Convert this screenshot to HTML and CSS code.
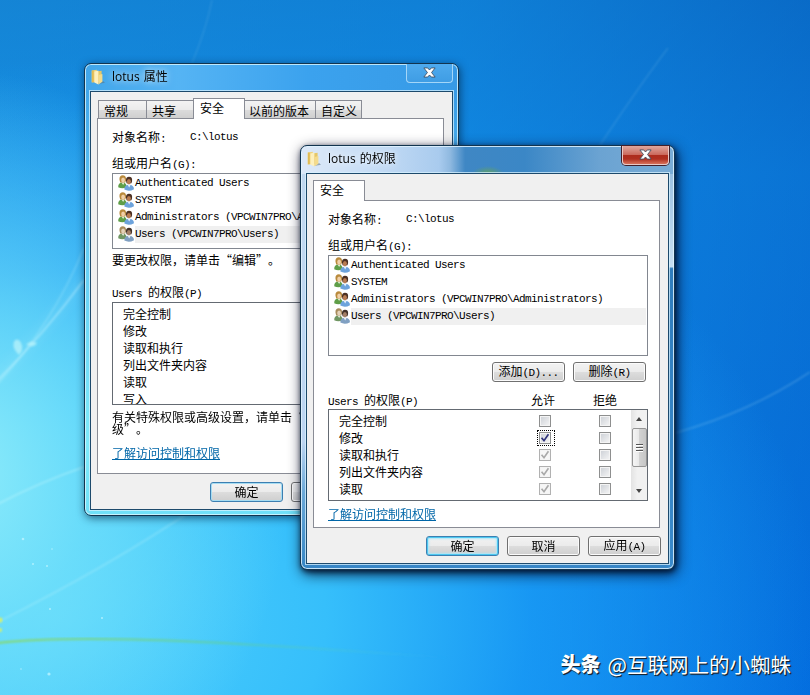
FILE: index.html
```
<!DOCTYPE html>
<html lang="zh-CN">
<head>
<meta charset="UTF-8" />
<title>lotus 的权限</title>
<link rel="stylesheet" href="styles.css">
</head>
<body>
<!-- обои рабочего стола -->
<svg class="wallpaper" viewBox="0 0 810 695" width="810" height="695" aria-hidden="true">
  <defs>
    <filter id="soft"><feGaussianBlur stdDeviation="0.8" /></filter>
    <filter id="haze" x="-50%" y="-50%" width="200%" height="200%"><feGaussianBlur stdDeviation="6" /></filter>
    <linearGradient id="stem"><stop offset="0" stop-color="#8fd84a" /><stop offset="0.5" stop-color="#5fd0a0" /><stop offset="1" stop-color="#40c0f0" stop-opacity="0" /></linearGradient>
  </defs>
  <g fill="none" stroke="#d8fbff" filter="url(#soft)">
    <path d="M-4 382 Q44 334 84 280" stroke-width="1.8" opacity="0.42" />
    <path d="M-4 386 Q54 322 84 248" stroke-width="1.2" opacity="0.28" />
    <path d="M-4 505 Q40 482 84 467" stroke-width="1.8" opacity="0.36" />
    <path d="M-4 623 Q110 566 200 505" stroke-width="1.8" opacity="0.24" />
    <path d="M192 63 Q206 30 212 0" stroke-width="1.5" opacity="0.1" />
    <path d="M600 145 Q640 85 668 48" stroke-width="1.5" opacity="0.12" />
    <path d="M675 433 Q750 412 810 372" stroke-width="1.6" opacity="0.18" />
    <path d="M-4 380 Q44 330 84 280" stroke-width="9" opacity="0.1" filter="url(#haze)" />
  </g>
  <path d="M-2 643 Q50 637 150 640 T450 658" fill="none" stroke="url(#stem)" stroke-width="1.8" opacity="0.8" filter="url(#soft)" />
  <g fill="#b9f3fa" opacity="0.75" filter="url(#soft)">
    <path d="M19 355 Q10 346 15 340 Q20 338 22 346 Q23 351 19 355z" />
    <path d="M26 345 Q31 339 37 343 Q35 348 26 345z" />
  </g>
  <g fill="#c8f7ff" opacity="0.7">
    <circle cx="23" cy="539" r="1.3" /><circle cx="33" cy="564" r="1" /><circle cx="47" cy="566" r="1" />
    <circle cx="50" cy="609" r="1" /><circle cx="102" cy="618" r="1.1" /><circle cx="49" cy="674" r="1.6" />
    <circle cx="52" cy="549" r="0.8" /><circle cx="21" cy="669" r="0.8" />
  </g>
  <g fill="#d4f06a" filter="url(#soft)"><circle cx="0" cy="620" r="2.5" /><circle cx="0" cy="630" r="2" /></g>
</svg>

<!-- общие значки -->
<svg class="sprite" aria-hidden="true">
  <symbol id="folder" viewBox="0 0 16 16">
    <path d="M8 15 L15 13.8 L13 12z" fill="#5c7280" opacity="0.55" />
    <path d="M6.4 2.4 L11.6 1.8 V12.6 L6.4 14z" fill="#e6c766" />
    <path d="M1.6 1.4 L6.8 0.8 V13 L1.6 13.4z" fill="#f0d27a" />
    <path d="M2.2 1.6 L3.6 1.5 V13.2 L2.2 13.2z" fill="#dcb64c" />
    <path d="M4.4 2.6 L8.4 1.4 V15.4 L4.4 13.4z" fill="#fdf0bd" />
    <path d="M8.4 6 L12.4 5 V12.8 L8.4 15.4z" fill="#f4db8c" />
  </symbol>
  <symbol id="users" viewBox="0 0 16 16">
    <path d="M0.2 12.2 Q0 7.6 4.6 7.4 Q8.6 7.5 8.8 12 Q4.5 14.4 0.2 12.2z" fill="#5f9e48" />
    <path d="M3.3 7.2 L5.2 10 L6.6 7.2z" fill="#e4efd8" />
    <path d="M1.5 4.8 Q1 0.4 5 0.3 Q8.7 0.6 7.9 5.4 L7.2 7.4 H2.2z" fill="#b98a3c" />
    <ellipse cx="5.1" cy="5" rx="1.9" ry="2.5" fill="#f0cfa8" />
    <path d="M6.4 14.6 Q6 10 11 9.7 Q15.8 9.9 16 14.2 Q11 17 6.4 14.6z" fill="#6da3dc" />
    <path d="M9.4 9.6 L11.2 12.6 L12.8 9.6z" fill="#eaf2fb" />
    <path d="M8 5.4 Q7.8 1.8 11 1.7 Q14.6 1.8 14.1 6 L13.4 8.2 H8.6z" fill="#4b3023" />
    <ellipse cx="10.9" cy="6.6" rx="2" ry="2.7" fill="#b97c52" />
  </symbol>
  <symbol id="close" viewBox="0 0 12 10">
    <path d="M0.8 0.8 H4.3 L6 2.7 L7.7 0.8 H11.2 L7.9 5 L11.2 9.2 H7.7 L6 7.3 L4.3 9.2 H0.8 L4.1 5z" fill="#fff" stroke="#3d4c60" stroke-width="0.8" />
  </symbol>
  <symbol id="check" viewBox="0 0 9 9">
    <path d="M1.4 4.2 L3.6 6.9 L7.6 1.2" fill="none" stroke="currentColor" stroke-width="1.5" />
  </symbol>
</svg>

<!-- окно свойств -->
<div class="window properties">
  <div class="titlebar">
    <svg class="folder"><use href="#folder" /></svg>
    <span class="caption">lotus 属性</span>
    <span class="close"><svg><use href="#close" /></svg></span>
  </div>
  <div class="content">
    <div class="tabs">
      <div class="tab general">常规</div>
      <div class="tab share">共享</div>
      <div class="tab active">安全</div>
      <div class="tab versions">以前的版本</div>
      <div class="tab custom">自定义</div>
    </div>
    <div class="page">
      <div class="object"><span>对象名称<i>:</i></span><i>C:\lotus</i></div>
      <div class="label">组或用户名<i>(G):</i></div>
      <div class="users">
        <div class="user"><svg><use href="#users" /></svg><i>Authenticated Users</i></div>
        <div class="user"><svg><use href="#users" /></svg><i>SYSTEM</i></div>
        <div class="user"><svg><use href="#users" /></svg><i>Administrators (VPCWIN7PRO\Administrators)</i></div>
        <div class="user selected"><svg><use href="#users" /></svg><i>Users (VPCWIN7PRO\Users)</i></div>
      </div>
      <div class="hint">要更改权限，请单击<b class="quote open">“</b>编辑<b class="quote">”</b>。</div>
      <div class="perm-head"><span><i>Users </i>的权限<i>(P)</i></span></div>
      <div class="perms">
        <div class="rows">
          <div class="row">完全控制</div>
          <div class="row">修改</div>
          <div class="row">读取和执行</div>
          <div class="row">列出文件夹内容</div>
          <div class="row">读取</div>
          <div class="row">写入</div>
        </div>
      </div>
      <div class="advanced">有关特殊权限或高级设置，请单击<b class="quote open">“</b><br>级<b class="quote">”</b>。</div>
      <a class="link">了解访问控制和权限</a>
    </div>
    <div class="actions">
      <button class="btn default">确定</button>
      <button class="btn">取消</button>
      <button class="btn">应用<i>(A)</i></button>
    </div>
  </div>
</div>

<!-- окно разрешений -->
<div class="window permissions">
  <div class="titlebar">
    <svg class="folder"><use href="#folder" /></svg>
    <span class="caption">lotus 的权限</span>
    <span class="close"><svg><use href="#close" /></svg></span>
  </div>
  <div class="content">
    <div class="tabs">
      <div class="tab active">安全</div>
    </div>
    <div class="page">
      <div class="object"><span>对象名称<i>:</i></span><i>C:\lotus</i></div>
      <div class="label">组或用户名<i>(G):</i></div>
      <div class="users">
        <div class="user"><svg><use href="#users" /></svg><i>Authenticated Users</i></div>
        <div class="user"><svg><use href="#users" /></svg><i>SYSTEM</i></div>
        <div class="user"><svg><use href="#users" /></svg><i>Administrators (VPCWIN7PRO\Administrators)</i></div>
        <div class="user selected"><svg><use href="#users" /></svg><i>Users (VPCWIN7PRO\Users)</i></div>
      </div>
      <div class="edit">
        <button class="btn">添加<i>(D)...</i></button>
        <button class="btn">删除<i>(R)</i></button>
      </div>
      <div class="perm-head"><span><i>Users </i>的权限<i>(P)</i></span><span>允许</span><span>拒绝</span></div>
      <div class="perms">
        <div class="rows">
          <div class="row"><span>完全控制</span><span class="box"></span><span class="box"></span></div>
          <div class="row"><span>修改</span><span class="box checked focus"><svg><use href="#check" /></svg></span><span class="box"></span></div>
          <div class="row"><span>读取和执行</span><span class="box disabled"><svg><use href="#check" /></svg></span><span class="box"></span></div>
          <div class="row"><span>列出文件夹内容</span><span class="box disabled"><svg><use href="#check" /></svg></span><span class="box"></span></div>
          <div class="row"><span>读取</span><span class="box disabled"><svg><use href="#check" /></svg></span><span class="box"></span></div>
        </div>
        <div class="scrollbar">
          <span class="arrow up"></span>
          <span class="thumb"></span>
          <span class="arrow down"></span>
        </div>
      </div>
      <a class="link">了解访问控制和权限</a>
    </div>
    <div class="actions">
      <button class="btn default hot">确定</button>
      <button class="btn">取消</button>
      <button class="btn">应用<i>(A)</i></button>
    </div>
  </div>
</div>

<div class="watermark"><strong>头条</strong><span>@互联网上的小蜘蛛</span></div>
</body>
</html>
```
FILE: styles.css
```
/* Рабочий стол */
html, body {
  margin: 0; padding: 0;
  width: 810px;
  height: 695px;
  overflow: hidden;
}
body {
  position: relative;
  font-family: 'Noto Sans CJK SC', sans-serif;
  font-size: 12px;
  color: #000;
  background:
    radial-gradient(ellipse 330px 400px at -40px 470px, rgba(150,240,250,0.9) 0%, rgba(120,228,250,0.7) 40%, rgba(90,215,250,0) 100%),
    radial-gradient(ellipse 760px 560px at 60px 620px, #50d0fc 0%, #36bffb 35%, rgba(28,160,248,0.75) 62%, rgba(10,130,240,0) 100%),
    linear-gradient(100deg, rgba(30,150,225,0.5) 0%, rgba(20,140,228,0.5) 50%, rgba(0,70,180,0.35) 100%),
    linear-gradient(180deg, #0b73c9 0%, #0d84e0 25%, #0a80e6 60%, #0583f6 100%);
}
i {
  font-family: 'Liberation Mono', monospace;
  font-style: normal;
  font-size: 11px;
  letter-spacing: -0.6px;
  white-space: pre;
}
.wallpaper {
  position: absolute;
  left: 0; top: 0;
}
.sprite {
  position: absolute;
  width: 0;
  height: 0;
}

/* Окна */
.window {
  position: absolute;
  width: 375px;
  box-sizing: border-box;
  padding: 0 5px 5px;
  border: 1px solid #12344f;
  border-radius: 7px;
  display: flex;
  flex-direction: column;
}
.properties {
  left: 84px;
  top: 63px;
  height: 453px;
  background: linear-gradient(180deg, rgba(80,180,245,0) 0, rgba(80,180,245,0) 28px, rgba(120,225,250,0.6) 160px, #7eeafa 380px, #70e0f8 100%), linear-gradient(90deg, #41a6ea 0%, #55b4f4 25%, #3ba2ee 60%, #379ae6 100%);
  box-shadow: inset 0 0 0 1px rgba(220,248,255,0.8), 1px 2px 8px rgba(0,30,60,0.65);
}
.permissions {
  left: 300px;
  top: 145px;
  height: 425px;
  background:
    radial-gradient(ellipse 16px 8px at 187px 28px, rgba(110,170,70,0.8), rgba(110,170,70,0)) top / 100% 28px no-repeat,
    linear-gradient(90deg, #dde9f8 0%, #c5dcf5 20%, #a9cbee 37%, #8fb9e0 40%, #3f87c4 44%, #3b87c6 60%, #6ba3d2 80%, #79acd6 100%) top / 100% 28px no-repeat,
    linear-gradient(180deg, #8fb8dc 0%, #c6dff2 28.5%, #2f7dbd 29%, #3a8acb 100%) right / 7px 100% no-repeat,
    linear-gradient(180deg, #c2d9f0 0%, #bcd5f2 70%, #6aa8d8 82%, #3585c4 100%) left / 7px 100% no-repeat,
    #3886c6;
  box-shadow: inset 0 0 0 1px rgba(225,243,255,0.85), 1px 2px 5px rgba(0,15,40,0.75), 2px 4px 14px rgba(0,10,35,0.85);
}
.titlebar {
  height: 27px;
  flex: none;
  display: flex;
  align-items: flex-start;
}
.folder {
  width: 16px;
  height: 16px;
  margin: 5px 0 0;
}
.caption {
  flex: 1;
  margin: 4px 0 0 6px;
  line-height: 18px;
  font-family: 'Open Sans', 'Noto Sans CJK SC', sans-serif;
  word-spacing: 1px;
  text-shadow: 0 0 6px rgba(255,255,255,0.7), 0 0 9px rgba(255,255,255,0.5);
}
.close {
  width: 47px;
  height: 19px;
  box-sizing: border-box;
  border: 1px solid #a4d6f8;
  border-top: 0;
  border-radius: 0 0 4px 4px;
  display: flex;
  justify-content: center;
  align-items: center;
  background: linear-gradient(#4eaaee, #3f9de4);
}
.close svg {
  width: 13px;
  height: 11px;
  margin-bottom: 2px;
}
.permissions .close {
  border-color: #e9c9c6;
  background: linear-gradient(#e0a79d 0%, #cb6a5d 48%, #ad2c1d 50%, #b03020 72%, #d6705a 100%);
  box-shadow: 0 0 0 1px #43202a;
}
.content {
  flex: 1;
  box-sizing: border-box;
  padding: 6px 8px 0 6px;
  border: 1px solid #1d4a6c;
  outline: 1px solid rgba(215,242,255,0.75);
  background: #f0f0f0;
}

/* Вкладки */
.tabs {
  display: flex;
  align-items: flex-end;
  height: 20px;
}
.tab {
  box-sizing: border-box;
  height: 18px;
  line-height: 19px;
  border: 1px solid #898c95;
  border-bottom: 0;
  border-left-width: 0;
  background: linear-gradient(#f3f3f3 0%, #ebebeb 50%, #dcdcdc 50%, #cfcfcf 100%);
}
.tab.active {
  position: relative;
  width: 52px;
  height: 21px;
  margin-bottom: -1px;
  padding-left: 6px;
  line-height: 18px;
  background: #fff;
  border-left-width: 1px;
}
.tab.general { width: 49px; margin-left: 1px; padding-left: 5px; border-left-width: 1px; }
.tab.share { width: 46px; padding-left: 5px; border-right: 0; }
.tab.versions { width: 71px; padding-left: 4px; }
.tab.custom { width: 46px; padding-left: 5px; }
.page {
  box-sizing: border-box;
  width: 347px;
  border: 1px solid #898c95;
  padding: 8px 0 0 14px;
  background: #fff;
}
.properties .page { height: 356px; }
.permissions .page { height: 328px; }

/* Содержимое вкладки */
.object {
  display: flex;
  height: 20px;
  line-height: 20px;
}
.object span { width: 78px; }
.label {
  height: 19px;
  margin-top: 7px;
  line-height: 18px;
}
.users {
  box-sizing: border-box;
  width: 320px;
  height: 101px;
  padding: 1px 1px 0 5px;
  border: 1px solid #828790;
}
.properties .users { height: 76px; }
.user {
  display: flex;
  height: 17px;
  line-height: 17px;
}
.user svg {
  width: 16px;
  height: 16px;
  margin-right: 1px;
}
.user i { flex: 1; }
.user.selected i { background: #f0f0f0; }
.user.selected svg { filter: saturate(0.6); }
.hint {
  height: 20px;
  margin-top: 1px;
  line-height: 20px;
}
.quote {
  display: inline-block;
  width: 12px;
  font-weight: normal;
}
.quote.open { text-align: right; }
.edit {
  display: flex;
  gap: 8px;
  margin: 6px 0 0 164px;
}
.perm-head {
  display: flex;
  height: 18px;
  margin-top: 9px;
  line-height: 18px;
}
.perm-head span:first-child { width: 203px; }
.perm-head span:nth-child(2) { width: 62px; }
.properties .perm-head {
  height: 19px;
  margin-top: 13px;
}
.perms {
  box-sizing: border-box;
  width: 320px;
  height: 92px;
  display: flex;
  overflow: hidden;
  border: 1px solid #646a72;
}
.properties .perms { height: 103px; }
.rows {
  flex: 1;
  padding: 2px 0 0 10px;
}
.row {
  display: grid;
  grid-template-columns: 200px 60px 20px;
  align-items: center;
  height: 17px;
  line-height: 17px;
}
.box {
  position: relative;
  box-sizing: border-box;
  width: 12px;
  height: 12px;
  border: 1px solid #8e8f8f;
  background: linear-gradient(135deg, #cbcfd5, #f6f6f6);
  box-shadow: inset 0 0 0 1px #f4f4f4;
}
.box svg {
  display: block;
  width: 10px;
  height: 10px;
}
.box.checked { color: #31347c; }
.box.disabled {
  color: #a9a9a9;
  border-color: #b1b1b1;
  background: #f6f6f6;
}
.box.focus::after {
  content: "";
  position: absolute;
  inset: -3px -5px -3px -3px;
  border: 1px dotted #000;
}
.scrollbar {
  width: 16px;
  display: flex;
  flex-direction: column;
  align-items: center;
  background: linear-gradient(90deg, #e3e3e3, #f1f1f1 40%);
}
.arrow {
  width: 0;
  border: 3.5px solid transparent;
}
.arrow.up { border-top: 0; border-bottom: 4px solid #444; margin: 7px 0; }
.arrow.down { border-bottom: 0; border-top: 4px solid #444; margin-top: 22px; }
.thumb {
  box-sizing: border-box;
  width: 15px;
  height: 39px;
  border: 1px solid #959595;
  border-radius: 2px;
  background:
    repeating-linear-gradient(180deg, #555 0, #555 1px, #fff 1px, #fff 2px, transparent 2px, transparent 3px) center / 7px 8px no-repeat,
    linear-gradient(90deg, #f5f5f5 0%, #e8e8e8 48%, #d2d2d2 50%, #c6c6c6 100%);
}
.advanced {
  height: 24px;
  margin-top: 6px;
  line-height: 12px;
}
.link {
  display: inline-block;
  margin-top: 3px;
  line-height: 20px;
  color: #0066a8;
  text-decoration: underline;
}
.properties .link { margin-top: 8px; }

/* Кнопки */
.actions {
  display: flex;
  gap: 8px;
  margin: 8px 0 0 113px;
}
.btn {
  box-sizing: border-box;
  flex: none;
  width: 73px;
  height: 20px;
  padding: 0;
  border: 1px solid #707070;
  border-radius: 3px;
  background: linear-gradient(#f2f2f2 0%, #ebebeb 50%, #dddddd 50%, #cfcfcf 100%);
  box-shadow: inset 0 0 0 1px #fbfbfb;
  font: inherit;
  line-height: 16px;
  color: #000;
}
.btn.default {
  border-color: #3c7fb1;
  box-shadow: inset 0 0 0 1px #a5dcf2;
}
.btn.hot { box-shadow: inset 0 0 0 1px #4dc8f0, inset 0 0 2px 2px #aee6f8; }

/* Подпись в углу */
.watermark {
  position: absolute;
  right: 19px;
  bottom: 16px;
  display: flex;
  align-items: center;
  gap: 7px;
  font-size: 20.5px;
  line-height: 30px;
  color: #fff;
  text-shadow: 1px 1px 1px #123, 1px 1px 0 #234;
}
.watermark strong { font-weight: 900; font-size: 20px; }
```
